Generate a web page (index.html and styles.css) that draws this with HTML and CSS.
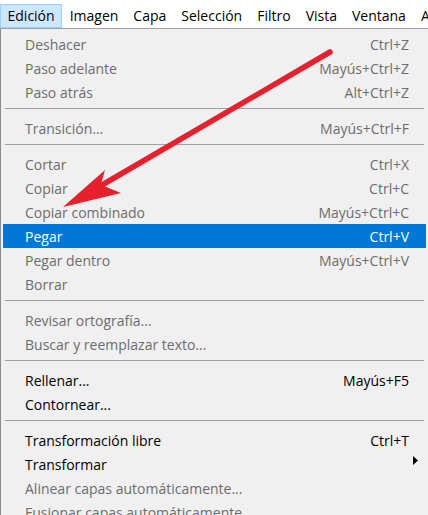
FILE: index.html
```html
<!DOCTYPE html>
<html lang="es">
<head>
  <meta charset="UTF-8" />
  <meta name="viewport" content="width=device-width, initial-scale=1.0"/>
  <title>Edición</title>
  <link rel="stylesheet" href="styles.css">
</head>
<body>
  <!-- Menu bar -->
  <nav class="menubar">
    <span class="bar-item open">Edición</span>
    <span class="bar-item">Imagen</span>
    <span class="bar-item">Capa</span>
    <span class="bar-item">Selección</span>
    <span class="bar-item">Filtro</span>
    <span class="bar-item">Vista</span>
    <span class="bar-item">Ventana</span>
    <span class="bar-item">Ayuda</span>
  </nav>

  <!-- Edit dropdown -->
  <div class="menu">
    <div class="item disabled"><span>Deshacer</span><span class="key">Ctrl+Z</span></div>
    <div class="item disabled"><span>Paso adelante</span><span class="key">Mayús+Ctrl+Z</span></div>
    <div class="item disabled"><span>Paso atrás</span><span class="key">Alt+Ctrl+Z</span></div>
    <div class="sep"></div>
    <div class="item disabled"><span>Transición...</span><span class="key">Mayús+Ctrl+F</span></div>
    <div class="sep"></div>
    <div class="item disabled"><span>Cortar</span><span class="key">Ctrl+X</span></div>
    <div class="item disabled"><span>Copiar</span><span class="key">Ctrl+C</span></div>
    <div class="item disabled"><span>Copiar combinado</span><span class="key">Mayús+Ctrl+C</span></div>
    <div class="item active"><span>Pegar</span><span class="key">Ctrl+V</span></div>
    <div class="item disabled"><span>Pegar dentro</span><span class="key">Mayús+Ctrl+V</span></div>
    <div class="item disabled"><span>Borrar</span></div>
    <div class="sep"></div>
    <div class="item disabled"><span>Revisar ortografía...</span></div>
    <div class="item disabled"><span>Buscar y reemplazar texto...</span></div>
    <div class="sep"></div>
    <div class="item"><span>Rellenar...</span><span class="key">Mayús+F5</span></div>
    <div class="item"><span>Contornear...</span></div>
    <div class="sep"></div>
    <div class="item"><span>Transformación libre</span><span class="key">Ctrl+T</span></div>
    <div class="item"><span>Transformar</span>
      <svg class="sub-arrow" width="5" height="9" viewBox="0 0 5 9"><path d="M0 0 L5 4.5 L0 9 Z" fill="#000"/></svg>
    </div>
    <div class="item disabled"><span>Alinear capas automáticamente...</span></div>
    <div class="item disabled"><span>Fusionar capas automáticamente...</span></div>
  </div>

  <!-- Red annotation arrow -->
  <svg class="pointer" width="428" height="515" viewBox="0 0 428 515">
    <line x1="330" y1="52" x2="102" y2="185" stroke="#e6202c" stroke-width="5.5" stroke-linecap="round"/>
    <polygon points="63,207 105,170 101,184 104,186 121,193" fill="#e6202c"/>
  </svg>
</body>
</html>
```

FILE: styles.css
```css
* {
  box-sizing: border-box;
}

body {
  margin: 0;
  padding: 0;
  height: 515px;
  overflow: hidden;
  position: relative;
  background: #fff;
  color: #000;
  font-family: "Open Sans", "Noto Sans", sans-serif;
  font-size: 14px;
}

.menubar {
  display: flex;
  height: 28px;
  padding-top: 4px;
  white-space: nowrap;
}

.bar-item {
  height: 24px;
  line-height: 22px;
  padding: 0 6.5px;
  border: 1px solid transparent;
}

.bar-item.open {
  background: #cce8ff;
  border-color: #99d1ff;
}

.menu {
  background: #f0f0f0;
  border-top: 1px solid #a0a0a0;
  border-left: 1px solid #8c8c8c;
  padding: 3px 2px 0 2px;
}

.item {
  display: flex;
  justify-content: space-between;
  align-items: center;
  height: 24px;
  padding: 0 17px 0 22px;
  white-space: nowrap;
}

.item.disabled {
  color: #6d6d6d;
}

.item.active {
  background: #0078d7;
  color: #fff;
}

.sub-arrow {
  margin-right: -9px;
  margin-bottom: 7px;
}

.sep {
  height: 12px;
  padding-top: 4px;
}

.sep::before {
  content: "";
  display: block;
  height: 1px;
  margin: 0 2px;
  background: #a0a0a0;
}

.pointer {
  position: absolute;
  top: 0;
  left: 0;
  pointer-events: none;
}
```
